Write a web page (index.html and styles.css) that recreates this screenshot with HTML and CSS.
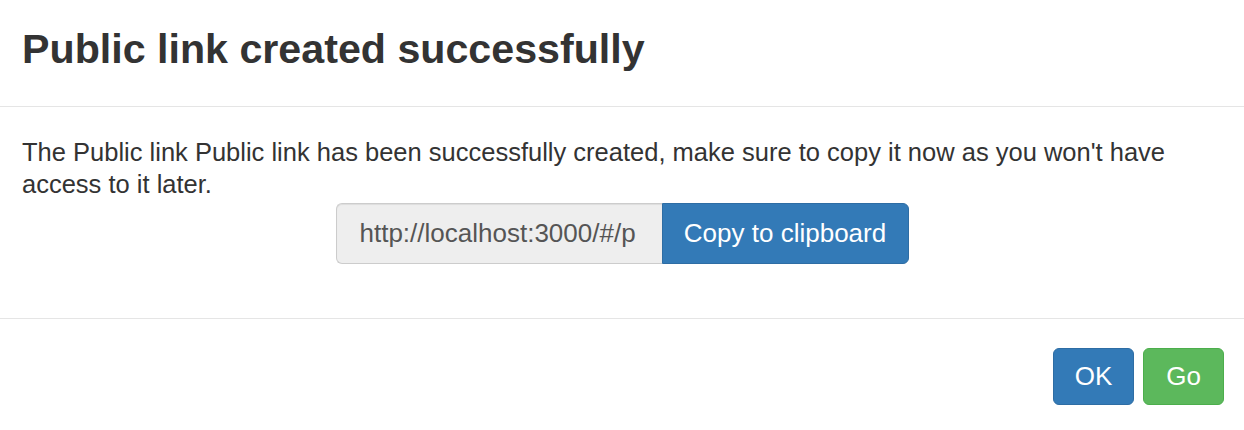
FILE: index.html
```html
<!DOCTYPE html>
<html lang="en">
<head>
<meta charset="utf-8">
<title>Public link created successfully</title>
<link rel="stylesheet" href="styles.css">
</head>
<body>
<div class="modal">
  <div class="modal-header">
    <h4 class="modal-title">Public link created successfully</h4>
  </div>
  <div class="modal-body">
    <p class="message">The Public link Public link has been successfully created, make sure to copy it now as you won't have access to it later.</p>
    <div class="link-row">
      <div class="input-group">
        <input class="link-input" type="text" readonly value="http://localhost:3000/#/p">
        <button class="btn btn-primary btn-addon" type="button">Copy to clipboard</button>
      </div>
    </div>
  </div>
  <div class="modal-footer">
    <button class="btn btn-primary" type="button">OK</button>
    <button class="btn btn-success" type="button">Go</button>
  </div>
</div>
</body>
</html>
```

FILE: styles.css
```css
* { box-sizing: border-box; }

html, body {
  margin: 0;
  padding: 0;
  background: #fff;
}

body {
  font-family: "Liberation Sans", Arial, Helvetica, sans-serif;
  color: #333;
}

.modal {
  width: 1244px;
  background: #fff;
}

.modal-header {
  padding: 26px 22px 34px;
  border-bottom: 1px solid #e5e5e5;
}

.modal-title {
  margin: 0;
  font-size: 41.2px;
  line-height: 46px;
  font-weight: 700;
  color: #333;
}

.modal-body {
  padding: 29px 22px 54px;
}

.message {
  margin: 0 0 3px;
  font-size: 25.5px;
  line-height: 32px;
}

.link-row {
  display: flex;
  justify-content: center;
}

.input-group {
  display: flex;
  height: 61px;
}

.link-input {
  width: 326px;
  height: 61px;
  margin: 0;
  padding: 0 23px;
  font-family: inherit;
  font-size: 26px;
  color: #555;
  background: #eee;
  border: 1px solid #ccc;
  border-right: 0;
  border-radius: 6px 0 0 6px;
  box-shadow: inset 0 1px 1px rgba(0, 0, 0, 0.075);
  outline: none;
}

.btn {
  margin: 0;
  font-family: inherit;
  font-size: 26px;
  line-height: 37px;
  color: #fff;
  white-space: nowrap;
  border: 1px solid transparent;
  border-radius: 6px;
  cursor: pointer;
}

.btn-primary {
  background: #337ab7;
  border-color: #2e6da4;
}

.btn-success {
  background: #5cb85c;
  border-color: #4cae4c;
}

.btn-addon {
  width: 247px;
  height: 61px;
  padding: 0;
  text-align: center;
  border-radius: 0 6px 6px 0;
}

.modal-footer {
  display: flex;
  justify-content: flex-end;
  gap: 9px;
  padding: 29px 20px 24px;
  border-top: 1px solid #e5e5e5;
}

.modal-footer .btn {
  height: 57px;
  padding: 9px 20px;
  min-width: 81px;
}
```
